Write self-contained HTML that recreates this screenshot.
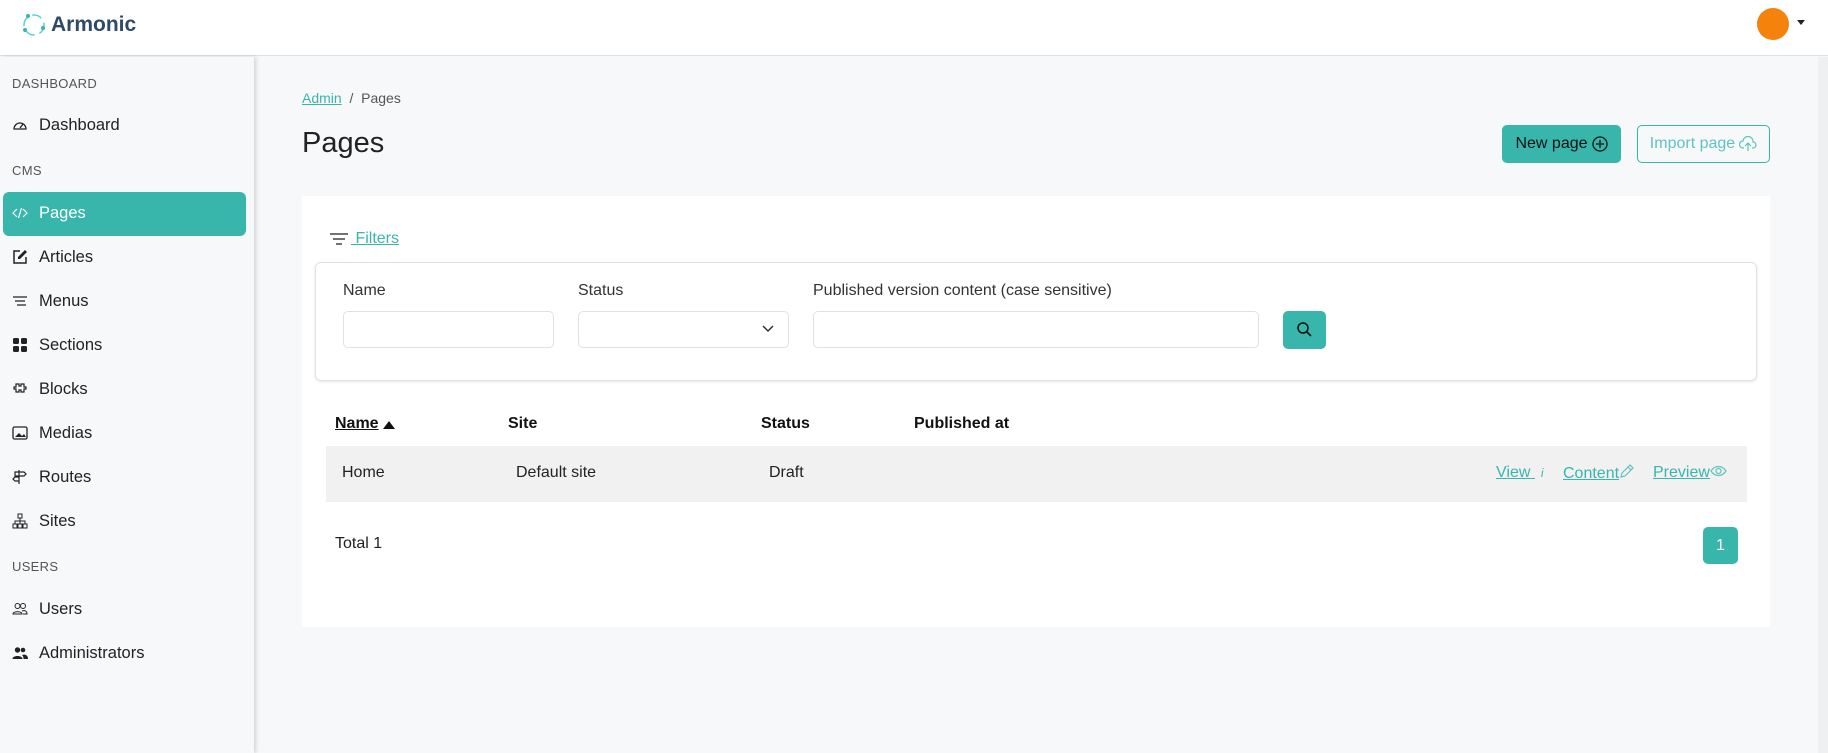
<!DOCTYPE html>
<html><head><meta charset="utf-8"><style>
*{box-sizing:border-box;margin:0;padding:0}
body{width:1828px;height:753px;overflow:hidden;background:#f7f8fa;font-family:"Liberation Sans",sans-serif;color:#212529;position:relative}
.abs{position:absolute}
.hdr{left:0;top:0;width:1828px;height:56px;background:#fff;border-bottom:1px solid #dde1e6}
.side{left:0;top:57px;width:254px;height:696px;background:#f7f8fa;box-shadow:2px 0 4px rgba(0,0,0,.15)}
.lbl{left:12px;font-size:13px;color:#555;letter-spacing:.3px}
.item{left:12px;font-size:16.5px;color:#222;display:flex;align-items:center;gap:11px;height:20px}
.item svg{width:16px;height:16px}
.act{left:3px;top:192px;width:243px;height:44px;background:#38b6ab;border-radius:6px}
.teal{color:#38b6ab}
a{color:#38b6ab;text-decoration:underline}
.inp{height:37px;border:1px solid #dee2e6;border-radius:5px;background:#fff}
.th{top:415px;font-size:16px;font-weight:bold;color:#111}
.td{top:464px;font-size:16px;color:#222}
</style></head><body>
<div class="abs hdr"></div>
<svg class="abs" style="left:21px;top:12px" width="26" height="26" viewBox="0 0 26 26"><circle cx="13" cy="13" r="10" fill="none" stroke="#5bd0d6" stroke-width="1.5" stroke-dasharray="10 5"/><circle cx="7" cy="4" r="2" fill="#38b6ab"/><circle cx="22" cy="16" r="2" fill="#38b6ab"/><circle cx="4" cy="18" r="2" fill="#38b6ab"/></svg>
<div class="abs" style="left:51px;top:13px;font-size:21px;font-weight:bold;color:#2f4a66">Armonic</div>
<div class="abs" style="left:1757px;top:8px;width:32px;height:32px;border-radius:50%;background:#f5820a"></div>
<div class="abs" style="left:1797px;top:20px;border-left:4px solid transparent;border-right:4px solid transparent;border-top:5px solid #222"></div>

<div class="abs side"></div>
<div class="abs lbl" style="top:76px">DASHBOARD</div>
<div class="abs item" style="top:115px"><svg viewBox="0 0 16 16"><path d="M2 12a6 6 0 1 1 12 0H2z" fill="none" stroke="#222" stroke-width="1.3"/><path d="M8 11l3-4" stroke="#222" stroke-width="1.3"/></svg>Dashboard</div>
<div class="abs lbl" style="top:163px">CMS</div>
<div class="abs act"></div>
<div class="abs item" style="top:203px;color:#fff"><svg viewBox="0 0 16 16"><path d="M5 4L1 8l4 4M11 4l4 4-4 4M9.5 3l-3 10" fill="none" stroke="#fff" stroke-width="1.2"/></svg>Pages</div>
<div class="abs item" style="top:247px"><svg viewBox="0 0 16 16"><path d="M8 2H2v12h12V8" fill="none" stroke="#222" stroke-width="1.5"/><path d="M13 1l2 2-7 7H6V8z" fill="#222"/></svg>Articles</div>
<div class="abs item" style="top:291px"><svg viewBox="0 0 16 16"><path d="M1 4h14M3 8h10M5 12h9" stroke="#222" stroke-width="1.3"/></svg>Menus</div>
<div class="abs item" style="top:335px"><svg viewBox="0 0 16 16"><rect x="1" y="1" width="6" height="6" rx="1.5" fill="#222"/><rect x="9" y="1" width="6" height="6" rx="1.5" fill="#222"/><rect x="1" y="9" width="6" height="6" rx="1.5" fill="#222"/><rect x="9" y="9" width="6" height="6" rx="1.5" fill="#222"/></svg>Sections</div>
<div class="abs item" style="top:379px"><svg viewBox="0 0 16 16"><path d="M4 3h3v2h2V3h3v3h2v2h-2v3H9V9H7v2H4V8H2V6h2z" fill="none" stroke="#222" stroke-width="1.2"/></svg>Blocks</div>
<div class="abs item" style="top:423px"><svg viewBox="0 0 16 16"><rect x="1" y="2" width="14" height="12" rx="1.5" fill="none" stroke="#222" stroke-width="1.3"/><path d="M3 12l4-4 3 3 2-2 2 3z" fill="#222"/></svg>Medias</div>
<div class="abs item" style="top:467px"><svg viewBox="0 0 16 16"><path d="M7 1v14M3 3h9l2 2-2 2H3zM7 8H3L1 10l2 2h4" fill="none" stroke="#222" stroke-width="1.2"/></svg>Routes</div>
<div class="abs item" style="top:511px"><svg viewBox="0 0 16 16"><rect x="6" y="1" width="4" height="4" fill="none" stroke="#222"/><rect x="1" y="11" width="4" height="4" fill="none" stroke="#222"/><rect x="6" y="11" width="4" height="4" fill="none" stroke="#222"/><rect x="11" y="11" width="4" height="4" fill="none" stroke="#222"/><path d="M8 5v6M3 11V8h10v3" fill="none" stroke="#222"/></svg>Sites</div>
<div class="abs lbl" style="top:559px">USERS</div>
<div class="abs item" style="top:599px"><svg viewBox="0 0 16 16"><circle cx="5.5" cy="5" r="2.5" fill="none" stroke="#222"/><circle cx="11" cy="5" r="2.5" fill="none" stroke="#222"/><path d="M1 13c0-3 9-3 9 0zM10 10c3-1 5 0 5 3h-4" fill="none" stroke="#222"/></svg>Users</div>
<div class="abs item" style="top:643px"><svg viewBox="0 0 16 16"><circle cx="5.5" cy="5" r="2.7" fill="#222"/><circle cx="11" cy="5" r="2.3" fill="#222"/><path d="M0.5 14c0-4 10-4 10 0zM11.5 14c0-2-.5-3-1.5-4 3-1 6 0 6 4z" fill="#222"/></svg>Administrators</div>

<div class="abs" style="left:302px;top:90px;font-size:14px;color:#555"><a>Admin</a> &nbsp;/&nbsp; Pages</div>
<div class="abs" style="left:302px;top:127px;font-size:29px;color:#222">Pages</div>
<div class="abs" style="left:1502px;top:125px;width:119px;height:38px;background:#38b6ab;border-radius:5px;font-size:16px;color:#111;display:flex;align-items:center;justify-content:center;gap:4px">New page <svg width="16" height="16" viewBox="0 0 16 16"><circle cx="8" cy="8" r="7" fill="none" stroke="#111" stroke-width="1.3"/><path d="M8 4v8M4 8h8" stroke="#111" stroke-width="1.3"/></svg></div>
<div class="abs" style="left:1637px;top:125px;width:133px;height:38px;border:1px solid #38b6ab;border-radius:5px;font-size:16px;color:#5fc4bb;display:flex;align-items:center;justify-content:center;gap:4px">Import page <svg width="18" height="16" viewBox="0 0 18 16"><path d="M5 12H4a3.5 3.5 0 0 1 0-7 5 5 0 0 1 10 1 3 3 0 0 1 0 6h-1M9 15V7M6 10l3-3 3 3" fill="none" stroke="#5fc4bb" stroke-width="1.2"/></svg></div>

<div class="abs" style="left:302px;top:196px;width:1468px;height:431px;background:#fff"></div>
<svg class="abs" style="left:330px;top:232px" width="18" height="14" viewBox="0 0 18 14"><path d="M0 2h18M3 7h12M6 12h6" stroke="#444" stroke-width="1.5"/></svg>
<div class="abs" style="left:351px;top:230px;font-size:16px"><a>&nbsp;Filters</a></div>
<div class="abs" style="left:315px;top:262px;width:1442px;height:119px;border:1px solid #dee2e6;border-radius:6px;box-shadow:0 1px 3px rgba(0,0,0,.1);background:#fff"></div>
<div class="abs" style="left:343px;top:282px;font-size:16px;color:#333">Name</div>
<div class="abs" style="left:578px;top:282px;font-size:16px;color:#333">Status</div>
<div class="abs" style="left:813px;top:282px;font-size:16px;color:#333">Published version content (case sensitive)</div>
<div class="abs inp" style="left:343px;top:311px;width:211px"></div>
<div class="abs inp" style="left:578px;top:311px;width:211px"></div>
<svg class="abs" style="left:762px;top:325px" width="12" height="8" viewBox="0 0 12 8"><path d="M1 1l5 5 5-5" fill="none" stroke="#333" stroke-width="1.5"/></svg>
<div class="abs inp" style="left:813px;top:311px;width:446px"></div>
<div class="abs" style="left:1283px;top:311px;width:43px;height:38px;background:#38b6ab;border-radius:5px"></div>
<svg class="abs" style="left:1296px;top:321px" width="17" height="17" viewBox="0 0 17 17"><circle cx="7" cy="7" r="5" fill="none" stroke="#111" stroke-width="1.5"/><path d="M11 11l4 4" stroke="#111" stroke-width="1.6"/></svg>

<div class="abs th" style="left:335px;text-decoration:underline">Name </div>
<div class="abs" style="left:383px;top:421px;border-left:6px solid transparent;border-right:6px solid transparent;border-bottom:8px solid #111"></div>
<div class="abs th" style="left:508px">Site</div>
<div class="abs th" style="left:761px">Status</div>
<div class="abs th" style="left:914px">Published at</div>
<div class="abs" style="left:326px;top:446px;width:1421px;height:56px;background:#f1f1f1"></div>
<div class="abs td" style="left:342px">Home</div>
<div class="abs td" style="left:516px">Default site</div>
<div class="abs td" style="left:769px">Draft</div>
<div class="abs td" style="left:1496px"><a>View </a><span class="teal" style="font-size:12px;font-style:italic;margin-left:6px">i</span></div>
<div class="abs td" style="left:1563px"><a>Content</a><svg width="15" height="15" viewBox="0 0 15 15" style="vertical-align:-1px"><path d="M2 13l1-4 8-8 3 3-8 8zM9 3l3 3" fill="none" stroke="#5fc4bb" stroke-width="1.2"/></svg></div>
<div class="abs td" style="left:1653px"><a>Preview</a><svg width="17" height="12" viewBox="0 0 17 12" style="vertical-align:0"><path d="M1 6c4-6 11-6 15 0-4 6-11 6-15 0z" fill="none" stroke="#5fc4bb" stroke-width="1.2"/><circle cx="8.5" cy="6" r="2.5" fill="none" stroke="#5fc4bb" stroke-width="1.2"/></svg></div>
<div class="abs" style="left:335px;top:535px;font-size:16px;color:#222">Total 1</div>
<div class="abs" style="left:1703px;top:527px;width:35px;height:37px;background:#38b6ab;border-radius:5px;color:#fff;font-size:16px;display:flex;align-items:center;justify-content:center">1</div>
<div class="abs" style="left:1818px;top:57px;width:10px;height:696px;background:#eef0f2"></div>
</body></html>
